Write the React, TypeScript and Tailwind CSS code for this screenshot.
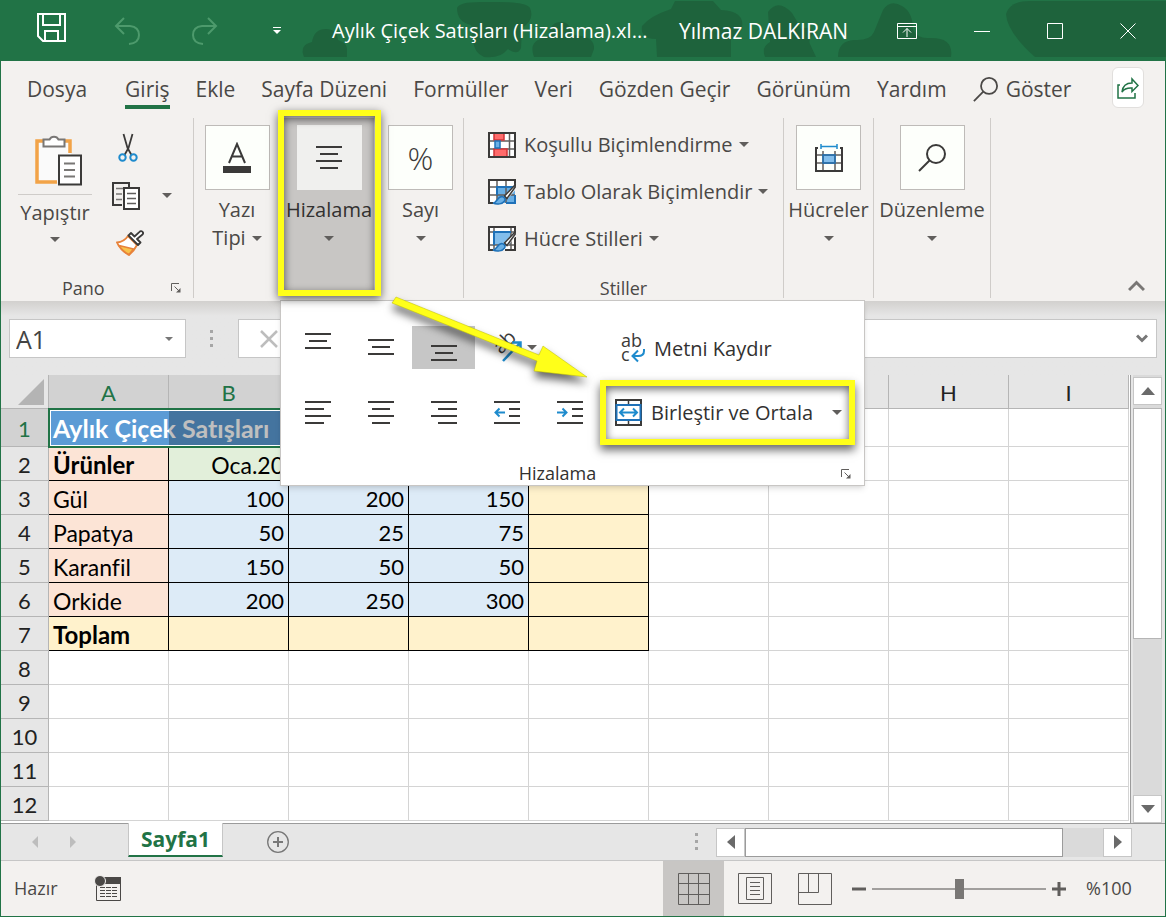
import type { ReactNode } from 'react';
import { clsx } from 'clsx';

interface IconProps {
  className?: string;
}

interface LinesProps {
  lines: [number, number, number][];
}

const TABS = ['Dosya', 'Giriş', 'Ekle', 'Sayfa Düzeni', 'Formüller', 'Veri', 'Gözden Geçir', 'Görünüm', 'Yardım'];

const COLUMNS = ['A', 'B', 'C', 'D', 'E', 'F', 'G', 'H', 'I'];

const PRODUCTS: { name: string; sales: number[] }[] = [
  { name: 'Gül', sales: [100, 200, 150] },
  { name: 'Papatya', sales: [50, 25, 75] },
  { name: 'Karanfil', sales: [150, 50, 50] },
  { name: 'Orkide', sales: [200, 250, 300] },
];

const EMPTY_ROWS = [8, 9, 10, 11, 12];

function Caret({ className }: IconProps) {
  return (
    <svg width="10" height="5" viewBox="0 0 10 5" className={clsx('shrink-0', className)}>
      <path d="M0 0h10L5 5z" fill="#605e5c" />
    </svg>
  );
}

function Launcher() {
  return (
    <svg width="10" height="10" viewBox="0 0 10 10" fill="none" stroke="#605e5c">
      <path d="M.5 8V.5H8M3.500 3.500l4.500 4.500" />
      <path d="M9.500 5v4.500H5z" fill="#605e5c" stroke="none" />
    </svg>
  );
}

/* Each line is [x, y, length] */
function Lines({ lines }: LinesProps) {
  return (
    <svg width="26" height="26" viewBox="0 0 26 26" stroke="#3b3a39" strokeWidth="2">
      {lines.map(([x, y, w]) => (
        <path key={y} d={`M${x} ${y}h${w}`} />
      ))}
    </svg>
  );
}

function Magnifier({ size, className }: { size: number; className?: string }) {
  return (
    <svg width={size} height={size} viewBox="0 0 28 28" fill="none" stroke="currentColor" strokeWidth="2" className={className}>
      <circle cx="18" cy="10" r="9" />
      <path d="M11.500 16.500L1 27" />
    </svg>
  );
}

function Brush() {
  return (
    <>
      <path d="M28 5.500L17 17l3 3.500L28 11z" fill="#f3f1ef" />
      <path d="M27.500 6.500L16.500 18l2.500 2.500L28 8z" fill="#fff" stroke="#3b3a39" strokeWidth="1.500" />
      <path d="M5 25c4 0 4-6 8.500-6.500 2.500 0 4.500 2.500 3 4.500C14.500 26 9 27 5 25z" fill="#69afe5" stroke="#1e71b8" strokeWidth="1.500" />
    </>
  );
}

function ConditionalIcon() {
  return (
    <svg width="28" height="26" viewBox="0 0 28 26" fill="none">
      <path d="M1 1h26v24H1z" fill="#fff" />
      <path d="M9 1v24M21.500 1v24M1 9h26M1 17h26" stroke="#605e5c" strokeWidth="1.500" />
      <path d="M6 1h10v7H6zM6 17h13v8H6z" fill="#ff6b6b" stroke="#d13438" strokeWidth="1.500" />
      <path d="M7 9h5v7H7z" fill="#69afe5" stroke="#1e71b8" strokeWidth="1.500" />
      <path d="M1 1h26v24H1z" stroke="#3b3a39" strokeWidth="2" />
    </svg>
  );
}

function TableFormatIcon() {
  return (
    <svg width="28" height="27" viewBox="0 0 28 27" fill="none">
      <path d="M1 2h26v23H1z" fill="#fff" />
      <path d="M9 9h18v16H9z" fill="#69afe5" />
      <path d="M9 2v23M18 2v23M1 9h26M1 17h26" stroke="#605e5c" strokeWidth="1.500" />
      <path d="M9 17V9h18M18 25h9v-8" stroke="#1e71b8" strokeWidth="2" />
      <path d="M5 25H1V2h26v5" stroke="#3b3a39" strokeWidth="2" />
      <Brush />
    </svg>
  );
}

function CellStylesIcon() {
  return (
    <svg width="28" height="27" viewBox="0 0 28 27" fill="none">
      <path d="M1 2h26v23H1z" fill="#fff" />
      <path d="M6 7h17v13H6z" fill="#83beec" />
      <path d="M6 2v22M23 2v23M1 7h26M1 20h26" stroke="#605e5c" strokeWidth="1.500" />
      <path d="M6 20V7h17" stroke="#1e71b8" strokeWidth="2" />
      <path d="M5 25H1V2h26v5M17 25h10V12" stroke="#3b3a39" strokeWidth="2" />
      <Brush />
    </svg>
  );
}

function CellsIcon() {
  return (
    <svg width="30" height="30" viewBox="0 0 30 30" fill="none">
      <path d="M9 12h12v9H9z" fill="#83beec" />
      <path d="M9 8v20M21 8v20M2 12h26M2 20h26" stroke="#605e5c" strokeWidth="1.500" />
      <path d="M9 12h12v8H9z" stroke="#1e71b8" strokeWidth="1.500" />
      <path d="M4 5H2v23h26V5h-2" stroke="#3b3a39" strokeWidth="2" />
      <path d="M7 3.500h16M7 1v5M23 1v5" stroke="#1e8bcd" strokeWidth="1.500" />
    </svg>
  );
}

function PasteIcon() {
  return (
    <svg width="48" height="53" viewBox="0 0 48 53" fill="none" className="ml-2">
      <path d="M2 8h34v41H2z" fill="#fafafa" />
      <path d="M8 8H2v41h20M30 8h5v12" stroke="#f2a347" strokeWidth="3.500" />
      <path d="M8.500 13.500v-7h6a5 5 0 0 1 9 0h6v7z" fill="#fff" stroke="#797775" strokeWidth="2" />
      <path d="M24 22.500h22v29H24z" fill="#fff" stroke="#3b3a39" strokeWidth="2" />
      <path d="M29 30.500h11M29 37h11M29 43.500h11" stroke="#797775" strokeWidth="2" />
    </svg>
  );
}

function CutIcon() {
  return (
    <svg width="20" height="29" viewBox="0 0 20 29" fill="none">
      <path d="M5.500 1l4 14 4 7M14.500 1l-4 14-4 7" stroke="#3b3a39" strokeWidth="1.800" />
      <circle cx="4.500" cy="24.500" r="3.200" stroke="#1e8bcd" strokeWidth="2" />
      <circle cx="15.500" cy="24.500" r="3.200" stroke="#1e8bcd" strokeWidth="2" />
    </svg>
  );
}

function CopyIcon() {
  return (
    <svg width="28" height="28" viewBox="0 0 28 28" fill="none">
      <path d="M10 23H1V1h16v4" stroke="#3b3a39" strokeWidth="2" />
      <path d="M4 6.500h7M4 12h6M4 17.500h6" stroke="#797775" strokeWidth="1.500" />
      <path d="M12 6h15v21H12z" fill="#fff" stroke="#3b3a39" strokeWidth="2" />
      <path d="M15 11.500h9M15 16.500h9M15 21.500h9" stroke="#605e5c" strokeWidth="1.500" />
    </svg>
  );
}

function PainterIcon() {
  return (
    <svg width="28" height="26" viewBox="0 0 28 26" fill="none">
      <path d="M12 6q-4 6-11 6.500Q4 20 13 25q5-4 8-10z" fill="#fff" stroke="#e8833a" strokeWidth="1.800" />
      <path d="M3 15.500l14.500 3.500-4.500 5.500Q7 22 3 15.500z" fill="#f8c34a" stroke="#e8833a" strokeWidth="1.500" />
      <path d="M12.500 5.500l9.500 9.500 2.500-2.500-3.500-3.500 5.500-4.500a2 2 0 0 0-3-2.700L18.500 6.500 15 3z" fill="#fff" stroke="#3b3a39" strokeWidth="1.800" strokeLinejoin="round" />
    </svg>
  );
}

function MergeIcon() {
  return (
    <svg width="27" height="27" viewBox="0 0 27 27" fill="none">
      <path d="M1 1h25v25H1z" stroke="#3b3a39" strokeWidth="2" />
      <path d="M13.500 1v5M13.500 21v5" stroke="#3b3a39" strokeWidth="1.500" />
      <path d="M1.500 6h24v15h-24z" fill="#fff" stroke="#1e71b8" strokeWidth="2" />
      <path d="M5 13.500h17M9 9.500l-4 4 4 4M18 9.500l4 4-4 4" stroke="#1e8bcd" strokeWidth="2" />
    </svg>
  );
}

function WrapIcon() {
  return (
    <svg width="26" height="28" viewBox="0 0 26 28" fill="none" className="overflow-visible font-['Open_Sans',sans-serif]">
      <text x="0" y="12" fontSize="18" fill="#3b3a39">ab</text>
      <text x="0" y="26" fontSize="18" fill="#3b3a39">c</text>
      <path d="M23 14v2q0 5-6 5h-5M17 15.500L11.500 21l5.500 5.500" stroke="#1e8bcd" strokeWidth="2" />
    </svg>
  );
}

function OrientationIcon() {
  return (
    <svg width="30" height="28" viewBox="0 0 30 28" fill="none" className="overflow-visible font-['Open_Sans',sans-serif]">
      <text x="0" y="0" fontSize="20" fill="#3b3a39" transform="translate(8 21) rotate(-45)">ab</text>
      <path d="M10 27L27 9M19 8.500h8.500V17" stroke="#1e8bcd" strokeWidth="2.500" />
    </svg>
  );
}

function IndentIcon({ outward }: { outward?: boolean }) {
  return (
    <svg width="26" height="26" viewBox="0 0 26 26" fill="none" strokeWidth="2">
      <path d="M0 2h26M15 9h11M15 16h11M0 23h26" stroke="#3b3a39" />
      <path d={outward ? 'M11 12.500H1.500M5.500 8.500l-4 4 4 4' : 'M0 12.500h9.500M5.500 8.500l4 4-4 4'} stroke="#1e8bcd" />
    </svg>
  );
}

function TitlePattern() {
  return (
    <svg width="890" height="58" viewBox="276 0 890 58" fill="#1e633c" className="absolute top-0 right-0">
      <path d="M304 57q-5-12 8-15 2-13 14-13 11 0 12 11 9 3 9 9v8z" />
      <path d="M457 8q2-7 30-6 40-1 43 6 5 12-8 20l-1 20q-3 8-13 1-8 10-24 8-10-4-11-17l-2-15q-14-3-14-17z" />
      <path d="M534 57q-5-14 6-18l9-4q1-13 12-13 10 0 10 13 24 0 23 14l-3 8z" />
      <path d="M657 57l-1-18q-16 0-14-13 8-10 29-17l4-8h38l8 9q24 1 21 18-3 9-11 10v19z" />
      <path d="M765 57q-4-10 5-15l-2-30q10-14 24 1 5 8 9 16 10-4 12 5-5 5-3 10l6 13z" />
      <path d="M838 57q0-16 16-17 16 1 20-8l9-22q7-11 19-4 11 6 11 24 5 9 16 8 25-1 22 19z" />
      <path d="M1035 57q-28-25-29-43 4-13 24-13h136v56z" />
    </svg>
  );
}

function TitleBar() {
  return (
    <header className="relative flex h-[61px] items-center bg-[#217346] pr-[30px] pl-9 text-[21px] text-white">
      <TitlePattern />
      <div className="relative flex flex-1 items-center">
        <button aria-label="Kaydet" className="mr-12 pb-2">
          <svg width="30" height="30" viewBox="0 0 30 30" fill="none" stroke="#fff" strokeWidth="2">
            <path d="M2 2h27v27H7l-5-5zM7 2v11h17V2M9 29V19h13v10" />
          </svg>
        </button>
        <button aria-label="Geri Al" className="mr-12">
          <svg width="28" height="28" viewBox="0 0 28 28" fill="none" stroke="#4d9a6c" strokeWidth="2">
            <path d="M10 1L2 9l8 8M2 9h14q9 1 9 9 0 8-10 9" />
          </svg>
        </button>
        <button aria-label="Yinele" className="mr-[55px]">
          <svg width="28" height="28" viewBox="0 0 28 28" fill="none" stroke="#4d9a6c" strokeWidth="2">
            <path d="M18 1l8 8-8 8M26 9H12q-9 1-9 9 0 8 10 9" />
          </svg>
        </button>
        <button aria-label="Hızlı Erişim" className="mr-[51px]">
          <svg width="8" height="8" viewBox="0 0 8 8" fill="#fff">
            <path d="M0 0h8v1H0zM0 3h8L4 7z" />
          </svg>
        </button>
        <h1 className="mr-8 w-[315px] text-[20px] whitespace-nowrap">Aylık Çiçek Satışları (Hizalama).xl...</h1>
        <span className="pt-0.5 whitespace-nowrap">Yılmaz DALKIRAN</span>
      </div>
      <div className="relative flex items-center gap-[57px]">
        <button aria-label="Şerit Görüntüleme">
          <svg width="20" height="16" viewBox="0 0 20 16" fill="none" stroke="#fff">
            <path d="M.5.500h19v15H.5zM.5 3.500h19M10 14V5.500M6 9.500l4-4 4 4" />
          </svg>
        </button>
        <button aria-label="Simge Durumuna Küçült">
          <svg width="16" height="16" viewBox="0 0 16 16" stroke="#fff">
            <path d="M0 8.500h16" />
          </svg>
        </button>
        <button aria-label="Ekranı Kapla">
          <svg width="16" height="16" viewBox="0 0 16 16" fill="none" stroke="#fff">
            <path d="M.5.500h15v15H.5z" />
          </svg>
        </button>
        <button aria-label="Kapat">
          <svg width="16" height="16" viewBox="0 0 16 16" stroke="#fff">
            <path d="M.5.500l15 15M15.500.500l-15 15" />
          </svg>
        </button>
      </div>
    </header>
  );
}

function RibbonTabs() {
  return (
    <nav className="flex h-[57px] items-start pt-3 pr-[21px] pl-[26px] text-[21px] leading-8 text-[#4a4846]">
      <div className="flex flex-1 items-start gap-[26px] whitespace-nowrap">
        {TABS.map((tab) => (
          <button
            key={tab}
            className={clsx(
              'border-b-4',
              tab === 'Dosya' && 'mr-3',
              tab === 'Giriş' ? 'border-[#217346]' : 'border-transparent'
            )}
          >
            {tab}
          </button>
        ))}
        <button className="flex items-center gap-2">
          <Magnifier size={25} />
          Göster
        </button>
      </div>
      <button aria-label="Paylaş" className="-mt-1.5 flex h-[41px] w-8 items-center justify-center rounded-md border border-[#e1dfdd] bg-white">
        <svg width="22" height="22" viewBox="0 0 22 22" fill="none" stroke="#217346" strokeWidth="1.500">
          <path d="M3 8H1v13h17v-5" />
          <path d="M5 15q1-9 10-9V2l6 6.500-6 6V11q-7-.500-10 4z" />
        </svg>
      </button>
    </nav>
  );
}

function RibbonTile({ label, icon, active }: { label: ReactNode; icon: ReactNode; active?: boolean }) {
  return (
    <button
      className={clsx(
        'flex w-full flex-col items-center pt-[7px] text-[20px] leading-7',
        active && 'h-[176px] bg-[#c8c6c4] text-[#323130]'
      )}
    >
      <span
        className={clsx(
          'mb-1.5 flex size-[65px] items-center justify-center border text-[#3b3a39]',
          active ? 'border-[#f0f0ee] bg-[#f0f0ee]' : 'border-[#bebbb8] bg-[#fdfffb]'
        )}
      >
        {icon}
      </span>
      {label}
    </button>
  );
}

function SingleLabel({ children }: { children: ReactNode }) {
  return (
    <>
      <span className="whitespace-nowrap">{children}</span>
      <span className="flex h-7 items-center">
        <Caret />
      </span>
    </>
  );
}

function AlignmentMenu() {
  const cell = 'flex h-[43px] items-center justify-center';
  return (
    <div
      role="menu"
      className="absolute top-full left-0 z-10 w-[585px] border border-[#c8c6c4] bg-white px-[5px] pt-[25px] text-[#323130] shadow-md"
    >
      <div className="flex">
        <div className="grid w-[315px] grid-cols-5 gap-y-[22px]">
          <button aria-label="Üste Hizala" className="flex h-[43px] items-start justify-center pt-1"><Lines lines={[[0, 4, 26], [4, 11, 18], [0, 18, 26]]} /></button>
          <button aria-label="Ortaya Hizala" className={cell}><Lines lines={[[0, 5, 26], [4, 12, 18], [0, 19, 26]]} /></button>
          <button aria-label="Alta Hizala" className="flex h-[43px] items-end justify-center bg-[#c6c6c6] pb-2"><Lines lines={[[0, 11, 26], [4, 18, 18], [0, 25, 26]]} /></button>
          <button aria-label="Yönlendirme" className="flex h-[43px] items-center gap-1 pl-[18px]"><OrientationIcon /><Caret /></button>
          <span />
          <button aria-label="Sola Hizala" className={cell}><Lines lines={[[0, 2, 26], [0, 9, 19], [0, 16, 26], [0, 23, 19]]} /></button>
          <button aria-label="Ortala" className={cell}><Lines lines={[[0, 2, 26], [4, 9, 18], [0, 16, 26], [4, 23, 18]]} /></button>
          <button aria-label="Sağa Hizala" className={cell}><Lines lines={[[0, 2, 26], [7, 9, 19], [0, 16, 26], [7, 23, 19]]} /></button>
          <button aria-label="Girintiyi Azalt" className={cell}><IndentIcon outward /></button>
          <button aria-label="Girintiyi Artır" className={cell}><IndentIcon /></button>
        </div>
        <div className="flex flex-1 flex-col gap-[22px] text-[20px] leading-7 whitespace-nowrap">
          <button className="flex h-[43px] items-center gap-[7px] pt-0.5 pl-5"><WrapIcon />Metni Kaydır</button>
          <div className="relative">
            <button className="flex h-[43px] w-full items-center gap-[9px] pr-[17px] pl-[14px]">
              <MergeIcon />
              Birleştir ve Ortala
              <Caret className="ml-auto" />
            </button>
            <div className="pointer-events-none absolute -inset-y-[11px] right-1 -left-px border-[6px] border-[#ffff19] shadow-[0_5px_9px_rgba(0,0,0,0.6),inset_0_3px_9px_rgba(0,0,0,0.6)]" />
          </div>
        </div>
      </div>
      <div className="flex h-[51px] items-end pb-0.5 text-[18px] leading-5">
        <span className="flex-1 pr-3 text-center">Hizalama</span>
        <button aria-label="Hizalama Ayarları" className="pr-2 pb-1"><Launcher /></button>
      </div>
      {/* Callout arrow to the merge button */}
      <svg width="210" height="100" viewBox="0 0 210 100" className="pointer-events-none absolute -top-2 left-[107px] drop-shadow-[0_6px_4px_rgba(0,0,0,0.6)]">
        <path d="M8 4L4 10l145 58-3 10 53 6-44-31-4 9z" fill="#ffff19" stroke="#b8b800" strokeWidth=".5" />
      </svg>
    </div>
  );
}

function StyleButton({ icon, label }: { icon: ReactNode; label: string }) {
  return (
    <button className="flex h-[47px] items-center gap-2 whitespace-nowrap">
      {icon}
      <span className="flex items-center gap-1.5">
        {label}
        <Caret />
      </span>
    </button>
  );
}

function Ribbon() {
  const group = 'flex h-[180px] border-r border-[#cfccc9]';
  return (
    <section className="flex h-[183px] text-[20px] text-[#4a4846]">
      <div className={clsx(group, 'w-[193px] flex-col')}>
        <div className="flex flex-1 pt-[15px] pl-[17px]">
          <button className="flex w-[74px] flex-col items-center leading-7">
            <PasteIcon />
            <span className="mt-2 mb-1 w-full border-t border-[#cfccc9] pt-1 text-[20px]">Yapıştır</span>
            <Caret className="mt-1.5" />
          </button>
          <div className="grid w-[68px] grid-rows-[29px_28px_26px] justify-center gap-y-5 pl-1">
            <button aria-label="Kes" className="flex justify-center"><CutIcon /></button>
            <button aria-label="Kopyala"><CopyIcon /></button>
            <button aria-label="Biçim Boyacısı" className="pl-1"><PainterIcon /></button>
          </div>
          <button aria-label="Kopyalama Seçenekleri" className="h-[125px] pl-0.5"><Caret /></button>
        </div>
        <div className="flex items-center pr-3 pl-[61px] text-[18px] leading-5">
          <span className="flex-1">Pano</span>
          <button aria-label="Pano Ayarları"><Launcher /></button>
        </div>
      </div>

      <div className={clsx(group, 'w-[270px]')}>
        <div className="w-[86px]">
          <RibbonTile
            icon={
              <svg width="30" height="32" viewBox="0 0 30 32" fill="none" stroke="#3b3a39" strokeWidth="2">
                <path d="M7 21l8-19 8 19M10 14.500h10" />
                <path d="M1 24h28v7H1z" fill="#3b3a39" stroke="none" />
              </svg>
            }
            label={
              <>
                <span>Yazı</span>
                <span className="flex items-center gap-1.5">Tipi <Caret /></span>
              </>
            }
          />
        </div>
        <div className="relative h-[182px] w-[98px] px-1">
          <RibbonTile
            active
            icon={<Lines lines={[[0, 2, 26], [4, 9, 18], [0, 16, 26], [4, 23, 18]]} />}
            label={<SingleLabel>Hizalama</SingleLabel>}
          />
          <AlignmentMenu />
          <div className="pointer-events-none absolute -top-2 -right-[3px] bottom-1 -left-0.5 z-20 border-[6px] border-[#ffff19] shadow-[0_3px_9px_rgba(0,0,0,0.6),inset_0_3px_9px_rgba(0,0,0,0.6)]" />
        </div>
        <div className="w-[85px]">
          <RibbonTile icon={<span className="text-[32px] font-light">%</span>} label={<SingleLabel>Sayı</SingleLabel>} />
        </div>
      </div>

      <div className={clsx(group, 'w-[320px] flex-col pl-6')}>
        <div className="flex-1 pt-[3px]">
          <StyleButton icon={<ConditionalIcon />} label="Koşullu Biçimlendirme" />
          <StyleButton icon={<TableFormatIcon />} label="Tablo Olarak Biçimlendir" />
          <StyleButton icon={<CellStylesIcon />} label="Hücre Stilleri" />
        </div>
        <span className="pr-6 text-center text-[18px] leading-5">Stiller</span>
      </div>

      <div className={clsx(group, 'w-[90px]')}>
        <RibbonTile icon={<CellsIcon />} label={<SingleLabel>Hücreler</SingleLabel>} />
      </div>
      <div className={clsx(group, 'w-[117px]')}>
        <RibbonTile icon={<Magnifier size={28} />} label={<SingleLabel>Düzenleme</SingleLabel>} />
      </div>
      <div className="flex flex-1 items-end justify-end pr-5 pb-[9px]">
        <button aria-label="Şeridi Daralt">
          <svg width="17" height="12" viewBox="0 0 17 12" fill="none" stroke="#797775" strokeWidth="3">
            <path d="M1 10l7.500-7.500L16 10" />
          </svg>
        </button>
      </div>
    </section>
  );
}

function Dots() {
  return (
    <svg width="4" height="18" viewBox="0 0 4 18" fill="#a6a6a6">
      <path d="M0 0h3v3H0zM0 7h3v3H0zM0 14h3v3H0z" />
    </svg>
  );
}

function FormulaBar() {
  return (
    <div className="flex h-[74px] items-start bg-linear-to-b from-[#d2d0ce] to-[#e6e6e6] to-20% pt-[18px] pr-2 pl-2">
      <div className="flex h-[39px] w-[177px] items-center border border-[#c6c6c6] bg-white pr-3">
        <input aria-label="Ad Kutusu" defaultValue="A1" className="w-full min-w-0 flex-1 pl-1.5 text-[25px] leading-8 text-[#444] outline-none" />
        <svg width="8" height="4" viewBox="0 0 8 4"><path d="M0 0h8L4 4z" fill="#777" /></svg>
      </div>
      <div className="flex h-[39px] w-[52px] items-center justify-center"><Dots /></div>
      <div className="flex h-[39px] flex-1 items-center border border-[#c6c6c6] bg-white pr-2 pl-5">
        <button aria-label="İptal">
          <svg width="20" height="20" viewBox="0 0 20 20" stroke="#bdbdbd" strokeWidth="2.500"><path d="M2 2l16 16M18 2L2 18" /></svg>
        </button>
        <input aria-label="Formül Çubuğu" className="min-w-0 flex-1 outline-none" />
        <button aria-label="Formül Çubuğunu Genişlet">
          <svg width="12" height="9" viewBox="0 0 12 9" fill="none" stroke="#777" strokeWidth="3"><path d="M1 1.500l5 5 5-5" /></svg>
        </button>
      </div>
    </div>
  );
}

function RowHeader({ n, active }: { n: number; active?: boolean }) {
  return (
    <th
      scope="row"
      className={clsx(
        'border-r border-b border-[#b5b5b5] pt-0.5 text-center font-normal',
        active ? 'bg-[#d2d2d2] text-[#217346]' : 'bg-[#e6e6e6] text-[#222]'
      )}
    >
      {n}
    </th>
  );
}

function Blanks({ count }: { count: number }) {
  return (
    <>
      {Array.from({ length: count }, (_, i) => (
        <td key={i} className="border-r border-b border-[#d4d4d4]" />
      ))}
    </>
  );
}

function Sheet() {
  const filled = 'border-r border-b border-black px-1 pt-0.5';
  return (
    <div className="flex flex-1 bg-[#e6e6e6]">
      <div className="min-w-0 flex-1 overflow-hidden border-r border-[#9b9b9b] bg-white">
        <table className="w-[1128px] table-fixed border-separate border-spacing-0 font-['Lato',sans-serif] text-[22px] leading-7 text-black [font-variant-ligatures:none]">
          <colgroup>
            <col className="w-12" />
            {COLUMNS.map((c) => (
              <col key={c} className="w-[120px]" />
            ))}
          </colgroup>
          <thead>
            <tr className="h-[34px]">
              <th className="border-r border-b border-[#b5b5b5] bg-[#e6e6e6] pr-1">
                <svg width="26" height="26" viewBox="0 0 26 26" className="ml-auto"><path d="M26 0v26H0z" fill="#b4b4b4" /></svg>
              </th>
              {COLUMNS.map((c, i) => (
                <th
                  key={c}
                  scope="col"
                  className={clsx(
                    'border-r border-b border-[#b5b5b5] pt-0.5 font-normal',
                    i < 5 ? 'bg-[#d2d2d2] text-[#217346]' : 'bg-[#e6e6e6] text-[#222]'
                  )}
                >
                  {c}
                </th>
              ))}
            </tr>
          </thead>
          <tbody>
            <tr className="h-[38px]">
              <RowHeader n={1} active />
              <td colSpan={5} className="relative bg-[#5b9bd5] px-1 text-[25px] font-bold text-white">
                Aylık Çiçek Satışları
                <div className="absolute inset-y-0 right-0 left-[120px] bg-black/25" />
                <div className="absolute -inset-px border-2 border-[#217346] shadow-[inset_0_0_0_1px_#fff]" />
              </td>
              <Blanks count={4} />
            </tr>
            <tr className="h-[34px]">
              <RowHeader n={2} />
              <td className={clsx(filled, 'bg-[#fce4d6] text-[24px] font-bold')}>Ürünler</td>
              {['Oca.20', 'Şub.20', 'Mar.20'].map((month) => (
                <td key={month} className={clsx(filled, 'bg-[#e2efda] text-right text-[23px]')}>{month}</td>
              ))}
              <td className={clsx(filled, 'bg-[#fff2cc]')} />
              <Blanks count={4} />
            </tr>
            {PRODUCTS.map((product, i) => (
              <tr key={product.name} className="h-[34px]">
                <RowHeader n={i + 3} />
                <td className={clsx(filled, 'bg-[#fce4d6] text-[23px]')}>{product.name}</td>
                {product.sales.map((value, j) => (
                  <td key={j} className={clsx(filled, 'bg-[#ddebf7] text-right')}>{value}</td>
                ))}
                <td className={clsx(filled, 'bg-[#fff2cc]')} />
                <Blanks count={4} />
              </tr>
            ))}
            <tr className="h-[34px]">
              <RowHeader n={7} />
              <td className={clsx(filled, 'bg-[#fff2cc] text-[24px] font-bold')}>Toplam</td>
              {[0, 1, 2, 3].map((j) => (
                <td key={j} className={clsx(filled, 'bg-[#fff2cc]')} />
              ))}
              <Blanks count={4} />
            </tr>
            {EMPTY_ROWS.map((n) => (
              <tr key={n} className="h-[34px]">
                <RowHeader n={n} />
                <Blanks count={9} />
              </tr>
            ))}
          </tbody>
        </table>
      </div>
      <div className="mr-[3px] ml-0.5 flex w-[29px] flex-col bg-[#dadada]">
        <button aria-label="Yukarı Kaydır" className="mt-0.5 mb-[3px] flex h-7 items-center justify-center border border-[#c6c6c6] bg-white">
          <svg width="14" height="8" viewBox="0 0 14 8"><path d="M0 8h14L7 0z" fill="#6a6a6a" /></svg>
        </button>
        <div className="h-[231px] border border-[#b5b5b5] bg-white" />
        <button aria-label="Aşağı Kaydır" className="mt-auto flex h-7 items-center justify-center border border-[#c6c6c6] bg-white">
          <svg width="14" height="8" viewBox="0 0 14 8"><path d="M0 0h14L7 8z" fill="#6a6a6a" /></svg>
        </button>
      </div>
    </div>
  );
}

function SheetTabs() {
  return (
    <div className="flex h-[38px] items-start border-t border-b border-t-[#9b9b9b] border-b-[#c6c6c6] bg-[#e6e6e6] pr-[33px] pl-[30px]">
      <div className="flex h-9 w-[97px] items-center gap-[30px]">
        <button aria-label="Önceki Sayfa">
          <svg width="8" height="12" viewBox="0 0 8 12"><path d="M7 0v12L1 6z" fill="#bdbdbd" /></svg>
        </button>
        <button aria-label="Sonraki Sayfa">
          <svg width="8" height="12" viewBox="0 0 8 12"><path d="M1 0v12l6-6z" fill="#bdbdbd" /></svg>
        </button>
      </div>
      <button className="-mt-px h-[34px] w-[95px] border-x border-b-2 border-x-[#c6c6c6] border-b-[#217346] bg-white text-[21px] leading-8 font-bold text-[#217346]">Sayfa1</button>
      <button aria-label="Yeni Sayfa" className="ml-11 flex h-9 items-center">
        <svg width="22" height="22" viewBox="0 0 22 22" fill="none" stroke="#777">
          <circle cx="11" cy="11" r="10.300" strokeWidth="1.300" />
          <path d="M11 6v10M6 11h10" strokeWidth="2" />
        </svg>
      </button>
      <div className="ml-auto flex h-9 items-center">
        <Dots />
        <div className="ml-[17px] flex h-[29px] w-[416px] bg-[#dadada]">
          <button aria-label="Sola Kaydır" className="flex w-[29px] items-center justify-center border border-[#c6c6c6] bg-white">
            <svg width="8" height="14" viewBox="0 0 8 14"><path d="M8 0v14L0 7z" fill="#6a6a6a" /></svg>
          </button>
          <div className="w-[318px] border border-[#9b9b9b] bg-white" />
          <button aria-label="Sağa Kaydır" className="ml-auto flex w-[29px] items-center justify-center border border-[#c6c6c6] bg-white">
            <svg width="8" height="14" viewBox="0 0 8 14"><path d="M0 0v14l8-7z" fill="#6a6a6a" /></svg>
          </button>
        </div>
      </div>
    </div>
  );
}

function StatusBar() {
  return (
    <footer className="flex h-[55px] items-center pr-[33px] pl-[13px] text-[18px] text-[#4a4846]">
      <span>Hazır</span>
      <button aria-label="Makro Kaydet" className="ml-9">
        <svg width="28" height="28" viewBox="0 0 28 28" fill="none">
          <path d="M2.500 10v15.500h24V3" stroke="#4a4846" />
          <path d="M9 2h18v7H9z" fill="#4a4846" />
          <circle cx="6" cy="6" r="5.500" fill="#4a4846" stroke="#f3f1ef" />
          <path d="M6 12.500h17M6 15.500h17M6 18.500h17M6 21.500h17" stroke="#4a4846" strokeDasharray="5 1" />
        </svg>
      </button>
      <div className="ml-auto flex h-full items-center">
        <button aria-label="Normal" className="flex h-full w-[61px] items-center justify-center bg-[#c8c6c4]">
          <svg width="32" height="32" viewBox="0 0 32 32" fill="none" stroke="#605e5c">
            <path d="M.5.500h31v31H.5zM10.500.500v31M20.500.500v31M.5 10.500h31M.5 21.500h31" />
          </svg>
        </button>
        <button aria-label="Sayfa Düzeni" className="ml-[14px]">
          <svg width="34" height="31" viewBox="0 0 34 31" fill="none" stroke="#605e5c">
            <path d="M.5.500h33v30H.5zM8.500 4.500h17v22h-17zM12 9.500h10M12 13.500h10M12 17.500h10M12 21.500h10" />
          </svg>
        </button>
        <button aria-label="Sayfa Sonu Önizleme" className="ml-[26px]">
          <svg width="34" height="32" viewBox="0 0 34 32" fill="none" stroke="#605e5c">
            <path d="M.5.500h33v31H.5zM10.500.500v19M.5 19.500h20V.500" />
          </svg>
        </button>
        <button aria-label="Uzaklaştır" className="ml-5">
          <svg width="14" height="14" viewBox="0 0 14 14" stroke="#605e5c" strokeWidth="3"><path d="M0 7h14" /></svg>
        </button>
        <input
          type="range"
          aria-label="Yakınlaştırma"
          className="mx-[6px] h-5 w-[174px] appearance-none bg-transparent [&::-webkit-slider-runnable-track]:h-0.5 [&::-webkit-slider-runnable-track]:bg-[#a19f9d] [&::-webkit-slider-thumb]:-mt-[9px] [&::-webkit-slider-thumb]:h-5 [&::-webkit-slider-thumb]:w-[9px] [&::-webkit-slider-thumb]:appearance-none [&::-webkit-slider-thumb]:bg-[#797775]"
        />
        <button aria-label="Yakınlaştır">
          <svg width="14" height="14" viewBox="0 0 14 14" stroke="#605e5c" strokeWidth="3"><path d="M0 7h14M7 0v14" /></svg>
        </button>
        <span className="ml-5 w-[46px]">%100</span>
      </div>
    </footer>
  );
}

export default function App() {
  return (
    <div className="flex min-h-screen flex-col bg-[#217346] font-['Open_Sans','Noto_Sans',sans-serif]">
      <TitleBar />
      <div className="mx-px mb-px flex flex-1 flex-col bg-[#f3f1ef]">
        <RibbonTabs />
        <Ribbon />
        <FormulaBar />
        <Sheet />
        <SheetTabs />
        <StatusBar />
      </div>
    </div>
  );
}
